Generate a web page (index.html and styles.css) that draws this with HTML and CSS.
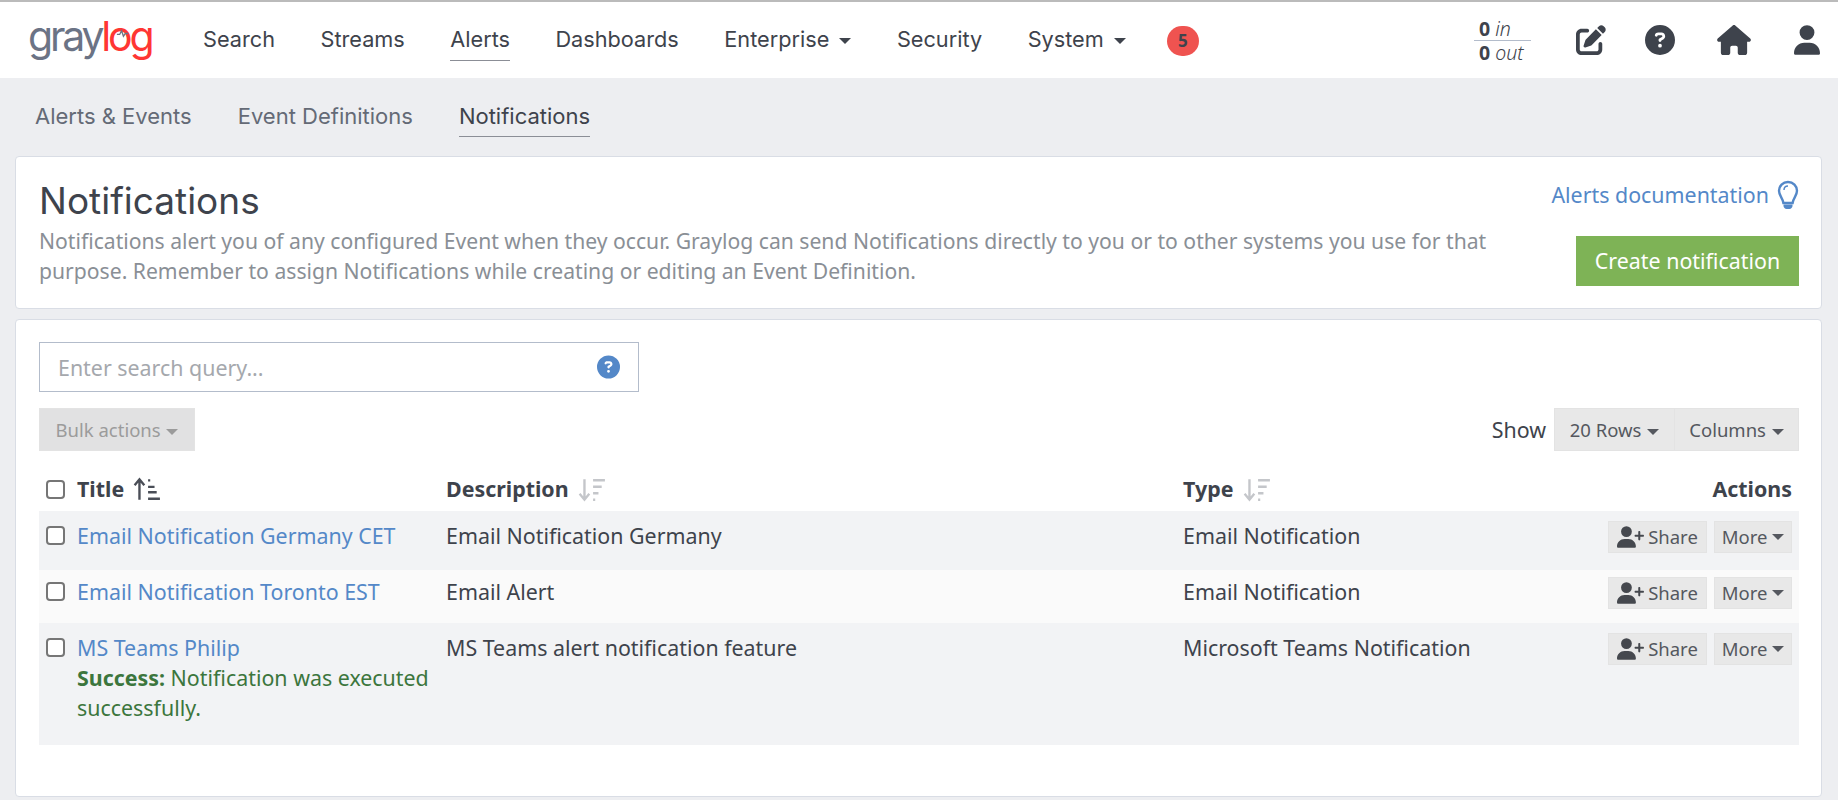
FILE: index.html
```html
<!DOCTYPE html>
<html>
<head>
    <meta charset="utf-8">
    <link rel="stylesheet" href="styles.css">
    <title>Notifications - Graylog</title>
</head>
<body>
    <nav class="topbar">
        <a class="logo"><span class="logo-gray">gray</span><span class="logo-red">l<span class="logo-o">o<svg class="logo-pulse" viewBox="0 0 16 16"><path d="M2 9h3l2-4 2 6 2-3h3" fill="none" stroke="#6b7385" stroke-width="1.4"/></svg></span>g</span></a>
        <ul class="main-nav">
            <li><a>Search</a></li>
            <li><a>Streams</a></li>
            <li><a class="active">Alerts</a></li>
            <li><a>Dashboards</a></li>
            <li><a>Enterprise <i class="caret caret-nav"></i></a></li>
            <li><a>Security</a></li>
            <li><a>System <i class="caret caret-nav"></i></a></li>
        </ul>
        <span class="badge">5</span>
        <div class="nav-right">
            <div class="throughput">
                <div class="tp-line"><b>0</b> <em>in</em></div>
                <div class="tp-line tp-out"><b>0</b> <em>out</em></div>
            </div>
            <svg class="nav-icon edit-icon" viewBox="0 0 512 512"><path d="M471.6 21.7c-21.9-21.9-57.3-21.9-79.2 0L362.3 51.7l97.9 97.9 30.1-30.1c21.9-21.9 21.9-57.3 0-79.2L471.6 21.7zm-299.2 220c-6.1 6.1-10.8 13.6-13.5 21.9l-29.6 88.8c-2.9 8.6-.6 18.1 5.8 24.6s15.9 8.7 24.6 5.8l88.8-29.6c8.2-2.7 15.7-7.4 21.9-13.5L437.7 172.3 339.7 74.3 172.4 241.7zM96 64C43 64 0 107 0 160V416c0 53 43 96 96 96H352c53 0 96-43 96-96V320c0-17.7-14.3-32-32-32s-32 14.3-32 32v96c0 17.7-14.3 32-32 32H96c-17.7 0-32-14.3-32-32V160c0-17.7 14.3-32 32-32h96c17.7 0 32-14.3 32-32s-14.3-32-32-32H96z"/></svg>
            <svg class="nav-icon help-icon" viewBox="0 0 512 512"><path d="M256 512A256 256 0 1 0 256 0a256 256 0 1 0 0 512zM169.8 165.3c7.9-22.3 29.1-37.3 52.8-37.3h58.3c34.9 0 63.1 28.3 63.1 63.1c0 22.6-12.1 43.5-31.7 54.8L280 264.4c-.2 13-10.9 23.6-24 23.6c-13.3 0-24-10.7-24-24V250.5c0-8.6 4.6-16.5 12.1-20.8l44.3-25.4c4.7-2.7 7.6-7.7 7.6-13.1c0-8.4-6.8-15.1-15.1-15.1H222.6c-3.4 0-6.4 2.1-7.5 5.3l-.4 1.2c-4.4 12.5-18.2 19-30.6 14.6s-19-18.2-14.6-30.6l.4-1.2zM224 352a32 32 0 1 1 64 0 32 32 0 1 1 -64 0z"/></svg>
            <svg class="nav-icon home-icon" viewBox="0 0 576 512"><path d="M575.8 255.5c0 18-15 32.1-32 32.1h-32l.7 160.2c0 2.7-.2 5.4-.5 8.1V472c0 22.1-17.9 40-40 40H456c-1.1 0-2.2 0-3.3-.1c-1.4 .1-2.8 .1-4.2 .1H416 392c-22.1 0-40-17.9-40-40V448 384c0-17.7-14.3-32-32-32H256c-17.7 0-32 14.3-32 32v64 24c0 22.1-17.9 40-40 40H160 128.1c-1.5 0-3-.1-4.5-.2c-1.2 .1-2.4 .2-3.6 .2H104c-22.1 0-40-17.9-40-40V360c0-.9 0-1.9 .1-2.8V287.6H32c-18 0-32-14-32-32.1c0-9 3-17 10-24L266.4 8c7-7 15-8 22-8s15 2 21 7L564.8 231.5c8 7 12 15 11 24z"/></svg>
            <svg class="nav-icon user-icon" viewBox="0 0 448 512"><path d="M224 256A128 128 0 1 0 224 0a128 128 0 1 0 0 256zm-45.7 48C79.8 304 0 383.8 0 482.3C0 498.7 13.3 512 29.7 512H418.3c16.4 0 29.7-13.3 29.7-29.7C448 383.8 368.2 304 269.7 304H178.3z"/></svg>
        </div>
    </nav>

    <ul class="sub-nav">
        <li><a>Alerts &amp; Events</a></li>
        <li><a>Event Definitions</a></li>
        <li><a class="active">Notifications</a></li>
    </ul>

    <section class="card header-card">
        <div class="header-text">
            <h1>Notifications</h1>
            <p>Notifications alert you of any configured Event when they occur. Graylog can send Notifications directly to you or to other systems you use for that purpose. Remember to assign Notifications while creating or editing an Event Definition.</p>
        </div>
        <div class="header-actions">
            <a class="doc-link">Alerts documentation
                <svg class="bulb" viewBox="0 0 22 30"><path d="M11 2C5.8 2 2 6 2 10.8c0 4.6 3.6 6.800 4.400 12.200h9.200C16.400 17.600 20 15.400 20 10.800 20 6 16.200 2 11 2z" fill="none" stroke="#5488c8" stroke-width="2.400"/><path d="M7 10c0-2.200 1.600-4 4-4" fill="none" stroke="#5488c8" stroke-width="1.500"/><path d="M6.500 24.500h9V26c0 1.500-1.500 3-3 3h-3c-1.500 0-3-1.500-3-3z" fill="#5488c8"/></svg>
            </a>
            <button class="btn-create">Create notification</button>
        </div>
    </section>

    <section class="card list-card">
        <div class="search-box">
            <span class="placeholder">Enter search query...</span>
            <svg class="search-help" viewBox="0 0 512 512"><path fill="#5488c8" d="M256 512A256 256 0 1 0 256 0a256 256 0 1 0 0 512zM169.8 165.3c7.9-22.3 29.1-37.3 52.8-37.3h58.3c34.9 0 63.1 28.3 63.1 63.1c0 22.6-12.1 43.5-31.7 54.8L280 264.4c-.2 13-10.9 23.6-24 23.6c-13.3 0-24-10.7-24-24V250.5c0-8.6 4.6-16.5 12.1-20.8l44.3-25.4c4.7-2.7 7.6-7.7 7.6-13.1c0-8.4-6.8-15.1-15.1-15.1H222.6c-3.4 0-6.4 2.1-7.5 5.3l-.4 1.2c-4.4 12.5-18.2 19-30.6 14.6s-19-18.2-14.6-30.6l.4-1.2zM224 352a32 32 0 1 1 64 0 32 32 0 1 1 -64 0z"/></svg>
        </div>

        <div class="toolbar">
            <button class="btn btn-bulk">Bulk actions <i class="caret"></i></button>
            <div class="toolbar-right">
                <span class="show-label">Show</span>
                <div class="btn-group">
                    <button class="btn btn-rows">20 Rows <i class="caret"></i></button>
                    <button class="btn btn-columns">Columns <i class="caret"></i></button>
                </div>
            </div>
        </div>

        <table class="list-table">
            <thead>
                <tr>
                    <th class="col-title">
                        <div class="title-cell"><input type="checkbox" class="check"><span>Title</span>
                            <svg class="sort sort-on" viewBox="0 0 26 22"><path d="M6 21V3M1.500 7.500 6 2l4.500 5.500M14 3h2M14 9h6M14 14h8M14 20h11" fill="none" stroke="#4a4e57" stroke-width="2.200"/></svg>
                        </div>
                    </th>
                    <th class="col-desc">Description
                        <svg class="sort" viewBox="0 0 26 22"><path d="M6 1v18M1.500 14.500 6 20l4.500-5.500M14 2h11M14 8h8M14 14h5M14 20h2" fill="none" stroke="#c4c6ca" stroke-width="2.200"/></svg>
                    </th>
                    <th class="col-type">Type
                        <svg class="sort" viewBox="0 0 26 22"><path d="M6 1v18M1.500 14.500 6 20l4.500-5.500M14 2h11M14 8h8M14 14h5M14 20h2" fill="none" stroke="#c4c6ca" stroke-width="2.200"/></svg>
                    </th>
                    <th class="col-actions">Actions</th>
                </tr>
            </thead>
            <tbody>
                <tr class="row-odd row-first">
                    <td><div class="title-cell"><input type="checkbox" class="check"><a>Email Notification Germany CET</a></div></td>
                    <td>Email Notification Germany</td>
                    <td>Email Notification</td>
                    <td class="col-actions"><div class="row-actions">
                        <button class="btn btn-small btn-share"><svg class="share-icon" viewBox="0 0 640 512"><path d="M96 128a128 128 0 1 1 256 0A128 128 0 1 1 96 128zM0 482.300C0 383.800 79.800 304 178.300 304h91.400C368.200 304 448 383.800 448 482.300c0 16.400-13.300 29.700-29.700 29.700H29.700C13.300 512 0 498.700 0 482.300zM504 312V248H440c-13.300 0-24-10.700-24-24s10.700-24 24-24h64V136c0-13.300 10.700-24 24-24s24 10.700 24 24v64h64c13.300 0 24 10.700 24 24s-10.700 24-24 24H552v64c0 13.300-10.700 24-24 24s-24-10.700-24-24z"/></svg> Share</button>
                        <button class="btn btn-small btn-more">More <i class="caret"></i></button>
                    </div></td>
                </tr>
                <tr class="row-even">
                    <td><div class="title-cell"><input type="checkbox" class="check"><a>Email Notification Toronto EST</a></div></td>
                    <td>Email Alert</td>
                    <td>Email Notification</td>
                    <td class="col-actions"><div class="row-actions">
                        <button class="btn btn-small btn-share"><svg class="share-icon" viewBox="0 0 640 512"><path d="M96 128a128 128 0 1 1 256 0A128 128 0 1 1 96 128zM0 482.300C0 383.800 79.800 304 178.300 304h91.400C368.200 304 448 383.800 448 482.300c0 16.400-13.300 29.700-29.700 29.700H29.700C13.300 512 0 498.700 0 482.300zM504 312V248H440c-13.300 0-24-10.700-24-24s10.700-24 24-24h64V136c0-13.300 10.700-24 24-24s24 10.700 24 24v64h64c13.300 0 24 10.700 24 24s-10.700 24-24 24H552v64c0 13.300-10.700 24-24 24s-24-10.700-24-24z"/></svg> Share</button>
                        <button class="btn btn-small btn-more">More <i class="caret"></i></button>
                    </div></td>
                </tr>
                <tr class="row-odd row-last">
                    <td><div class="title-cell"><input type="checkbox" class="check"><div><a>MS Teams Philip</a><div class="success"><b>Success:</b> <span>Notification was executed</span> <span>successfully.</span></div></div></div></td>
                    <td>MS Teams alert notification feature</td>
                    <td>Microsoft Teams Notification</td>
                    <td class="col-actions"><div class="row-actions">
                        <button class="btn btn-small btn-share"><svg class="share-icon" viewBox="0 0 640 512"><path d="M96 128a128 128 0 1 1 256 0A128 128 0 1 1 96 128zM0 482.300C0 383.800 79.800 304 178.300 304h91.400C368.200 304 448 383.800 448 482.300c0 16.400-13.300 29.700-29.700 29.700H29.700C13.300 512 0 498.700 0 482.300zM504 312V248H440c-13.300 0-24-10.700-24-24s10.700-24 24-24h64V136c0-13.300 10.700-24 24-24s24 10.700 24 24v64h64c13.300 0 24 10.700 24 24s-10.700 24-24 24H552v64c0 13.300-10.700 24-24 24s-24-10.700-24-24z"/></svg> Share</button>
                        <button class="btn btn-small btn-more">More <i class="caret"></i></button>
                    </div></td>
                </tr>
            </tbody>
        </table>
    </section>
</body>
</html>
```

FILE: styles.css
```css
* {box-sizing: border-box;}
html, body {height: 800px; overflow: hidden;}
body {margin: 0; background-color: #edeef1; color: #3e434c; font-family: "Noto Sans", sans-serif; font-size: 21.4px; line-height: 30px;}
ul {list-style: none; margin: 0; padding: 0;}
button {font-family: inherit; cursor: pointer;}

/* top bar */
.topbar {display: flex; align-items: center; height: 78px; background: #fff; border-top: 2px solid #bbb; padding-left: 28px; padding-right: 18px;}
.logo {display: flex; width: 175px; font-family: Inter, sans-serif; font-size: 41px; line-height: 46px; letter-spacing: -3.2px; font-weight: 400; padding-bottom: 8px;}
.logo-gray {color: #6b7385;}
.logo-red {color: #ff3633;}
.logo-o {position: relative;}
.logo-pulse {position: absolute; left: 7px; top: 15px; width: 15px; height: 15px;}
.main-nav {display: flex; gap: 45.5px; font-family: Inter, sans-serif; font-size: 21.7px;}
.main-nav a {display: block; padding: 5px 0 7px; line-height: 28px; color: #3e434c; border-bottom: 1px solid #fff;}
.main-nav a.active {border-bottom-color: #8b8e96;}
.caret {display: inline-block; vertical-align: middle; margin-left: 1px; border-top: 6px solid; border-left: 6px solid transparent; border-right: 6px solid transparent;}
.caret-nav {margin-left: 4px;}
.badge {margin-left: 41px; margin-top: 2px; width: 32px; height: 30px; border-radius: 15px; background: #ef5350; text-align: center; font-size: 17px; font-weight: 700; line-height: 30px; color: #3e434c;}
.nav-right {display: flex; align-items: center; margin-left: auto;}
.throughput {width: 57px; font-size: 19.5px; line-height: 23px; padding-left: 5px; margin-right: 45px;}
.tp-line {white-space: nowrap;}
.tp-line em {font-weight: 300;}
.tp-out {border-top: 1px solid #b3bccb; margin-left: -5px; padding-left: 5px;}
.nav-icon {height: 30px; fill: #3e434c; display: block;}
.edit-icon {width: 30px; margin-right: 39px;}
.help-icon {width: 30px; margin-right: 42px;}
.home-icon {width: 34px; margin-right: 43px;}
.user-icon {width: 26px;}

/* sub nav */
.sub-nav {display: flex; gap: 46px; height: 78px; padding: 23px 0 0 35px; font-family: Inter, sans-serif; font-size: 22px; color: #646a76;}
.sub-nav a {display: block; padding: 0 0 5px; line-height: 30px; border-bottom: 1px solid transparent;}
.sub-nav a.active {color: #3e434c; border-bottom-color: #8b8e96;}

/* cards */
.card {background: #fff; border: 1px solid #d9dde5; border-radius: 4px; margin: 0 16px 0 15px; padding: 0 22px 0 23px;}
.header-card {display: flex; justify-content: space-between; height: 153px; margin-bottom: 10px;}
.header-text {width: 1470px; padding-top: 22px;}
h1 {margin: 0; font-family: Inter, sans-serif; font-size: 37px; font-weight: 400; line-height: 44px;}
.header-text p {margin: 3px 0 0; color: #8a8f96; font-size: 21.15px; line-height: 30px;}
.header-actions {display: flex; flex-direction: column; align-items: flex-end; padding-top: 22px;}
.doc-link {display: flex; align-items: center; gap: 8px; color: #5488c8; line-height: 32px; white-space: nowrap;}
.bulb {width: 22px; height: 30px;}
.btn-create {margin-top: 25px; padding: 0 0 2px; width: 223px; height: 50px; background: #7eb356; border: 0; color: #fff; font-size: 21.4px;}

.list-card {height: 478px; padding-top: 22px;}
.search-box {display: flex; align-items: center; justify-content: space-between; width: 600px; height: 50px; border: 1px solid #b3bccb; padding: 0 18px;}
.placeholder {color: #a5a8ad; padding-top: 2px;}
.search-help {width: 23px; height: 24px;}
.toolbar {display: flex; justify-content: space-between; margin-top: 16px;}
.toolbar-right {display: flex; align-items: center; gap: 8px;}
.btn-group {display: flex;}
.btn {height: 43px; padding: 0; background: #e8e8e8; border: 1px solid #e3e3e3; color: #55585f; font-size: 18.5px; white-space: nowrap;}
.btn-group .btn + .btn {margin-left: -1px;}
.btn-rows {width: 121px;}
.btn-columns {width: 125px;}
.btn-bulk {width: 156px; background: #e1e1e2; color: #9b9b9b;}

/* table */
.list-table {width: 100%; table-layout: fixed; border-collapse: collapse;}
.list-table th {height: 60px; padding: 23px 8px 0; text-align: left; font-weight: 700; vertical-align: top;}
.list-table td {padding: 10px 8px 0; vertical-align: top;}
.col-title {width: 399px;}
.col-desc {width: 737px;}
.col-type {width: 330px;}
.list-table .col-actions {text-align: right; padding-right: 7px;}
.title-cell {display: flex; gap: 12px; align-items: flex-start;}
.list-table th .title-cell {align-items: center;}
.list-table td:first-child, .list-table th:first-child {padding-left: 7px; padding-right: 0;}
.check {appearance: none; flex: none; width: 19px; height: 19px; margin: 5px 0 0; border: 2px solid #767676; border-radius: 4px; background: #fff;}
.list-table th .check {margin-top: 0;}
.title-cell a {color: #5488c8;}
.sort {width: 28px; height: 24px; vertical-align: -5px; margin-left: 4px;}
.sort-on {margin-left: -3px;}
.row-first td {height: 59px;}
.row-even td {height: 53px; padding-top: 7px; background: #fafafa;}
.row-odd td {background: #f2f3f5;}
.row-last td {height: 122px;}
.success {color: #3c763d;}
.row-actions {display: flex; justify-content: flex-end; gap: 7px;}
.btn-small {height: 32px; line-height: 30px; display: flex; align-items: center; justify-content: center; gap: 4px;}
.btn-share {width: 99px;}
.btn-more {width: 78px;}
.share-icon {width: 27px; height: 22px; fill: #45484e;}
```
